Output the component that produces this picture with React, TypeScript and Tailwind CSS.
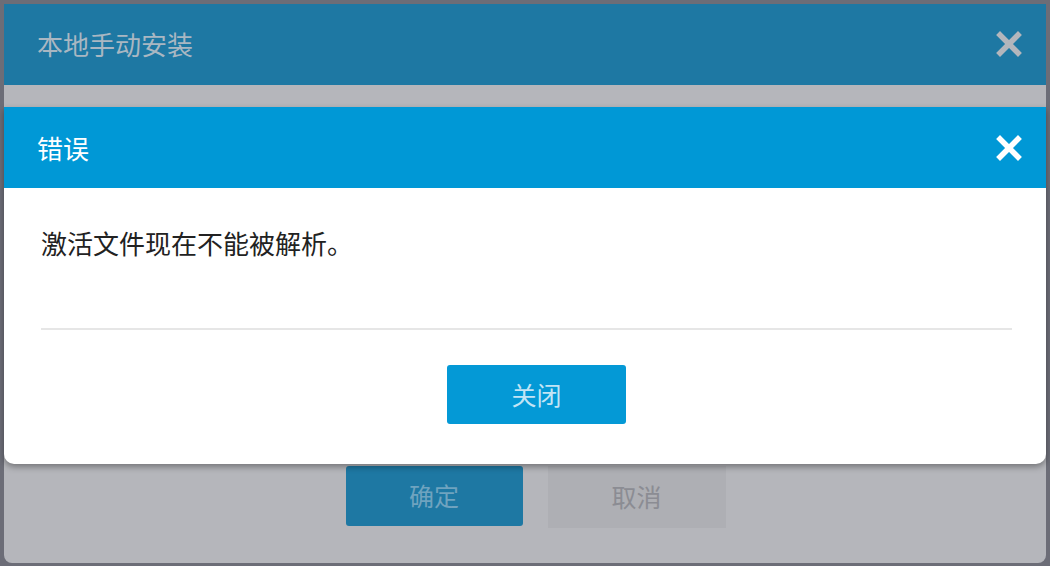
const FONT = '"Microsoft YaHei", "Noto Sans CJK SC", "Noto Sans", sans-serif';

function CloseIcon({ color, size = 26 }: { color: string; size?: number }) {
  return (
    <svg width={size} height={size} viewBox="0 0 26 26">
      <path d="M4 4 L22 22 M22 4 L4 22" stroke={color} strokeWidth="5.5" strokeLinecap="square" />
    </svg>
  );
}

export default function App() {
  return (
    <div
      className="relative w-[1050px] h-[566px] overflow-hidden bg-[#6c6d77] px-[4px] pt-[4px] pb-[3px]"
      style={{ fontFamily: FONT }}
    >
      {/* dimmed background dialog */}
      <div className="flex flex-col h-full rounded-b-[8px] overflow-hidden">
        <div className="flex items-center justify-between h-[81px] bg-[#1e78a3] pl-[33px] pr-[24px] pb-[2px] shrink-0">
          <span className="text-[26px] text-[#a9b7c2]">本地手动安装</span>
          <CloseIcon color="#b3b6bc" />
        </div>
        <div className="flex-1 flex items-end justify-center gap-[25px] bg-[#b5b6bb] pb-[37px] pl-[21px]">
          <div className="w-[177px] h-[60px] rounded-[3px] bg-[#1e78a3] flex items-center justify-center text-[25px] text-[#6fa3bf]">
            确定
          </div>
          <div className="w-[178px] h-[62px] bg-[#aeafb4] flex items-center justify-center text-[25px] text-[#8b8c93] -mb-[2px]">
            取消
          </div>
        </div>
      </div>

      {/* error dialog */}
      <div className="absolute left-[4px] right-[4px] top-[107px] rounded-b-[10px] bg-white overflow-hidden shadow-[0_3px_6px_rgba(0,0,0,0.35)]">
        <div className="flex items-center justify-between h-[81px] bg-[#0098d6] pl-[33px] pr-[24px]">
          <span className="text-[26px] text-white">错误</span>
          <CloseIcon color="#ffffff" />
        </div>
        <div className="pl-[37px] pr-[34px] pt-[40px] pb-[40px]">
          <p className="text-[26px] leading-[30px] text-[#222222]">激活文件现在不能被解析。</p>
          <div className="mt-[70px] h-[2px] bg-[#e6e6e6]" />
          <div className="mt-[35px] flex justify-center pl-[20px]">
            <button className="w-[179px] h-[59px] rounded-[3px] bg-[#0499d6] text-[25px] text-[#c2e4f5]">
              关闭
            </button>
          </div>
        </div>
      </div>
    </div>
  );
}
